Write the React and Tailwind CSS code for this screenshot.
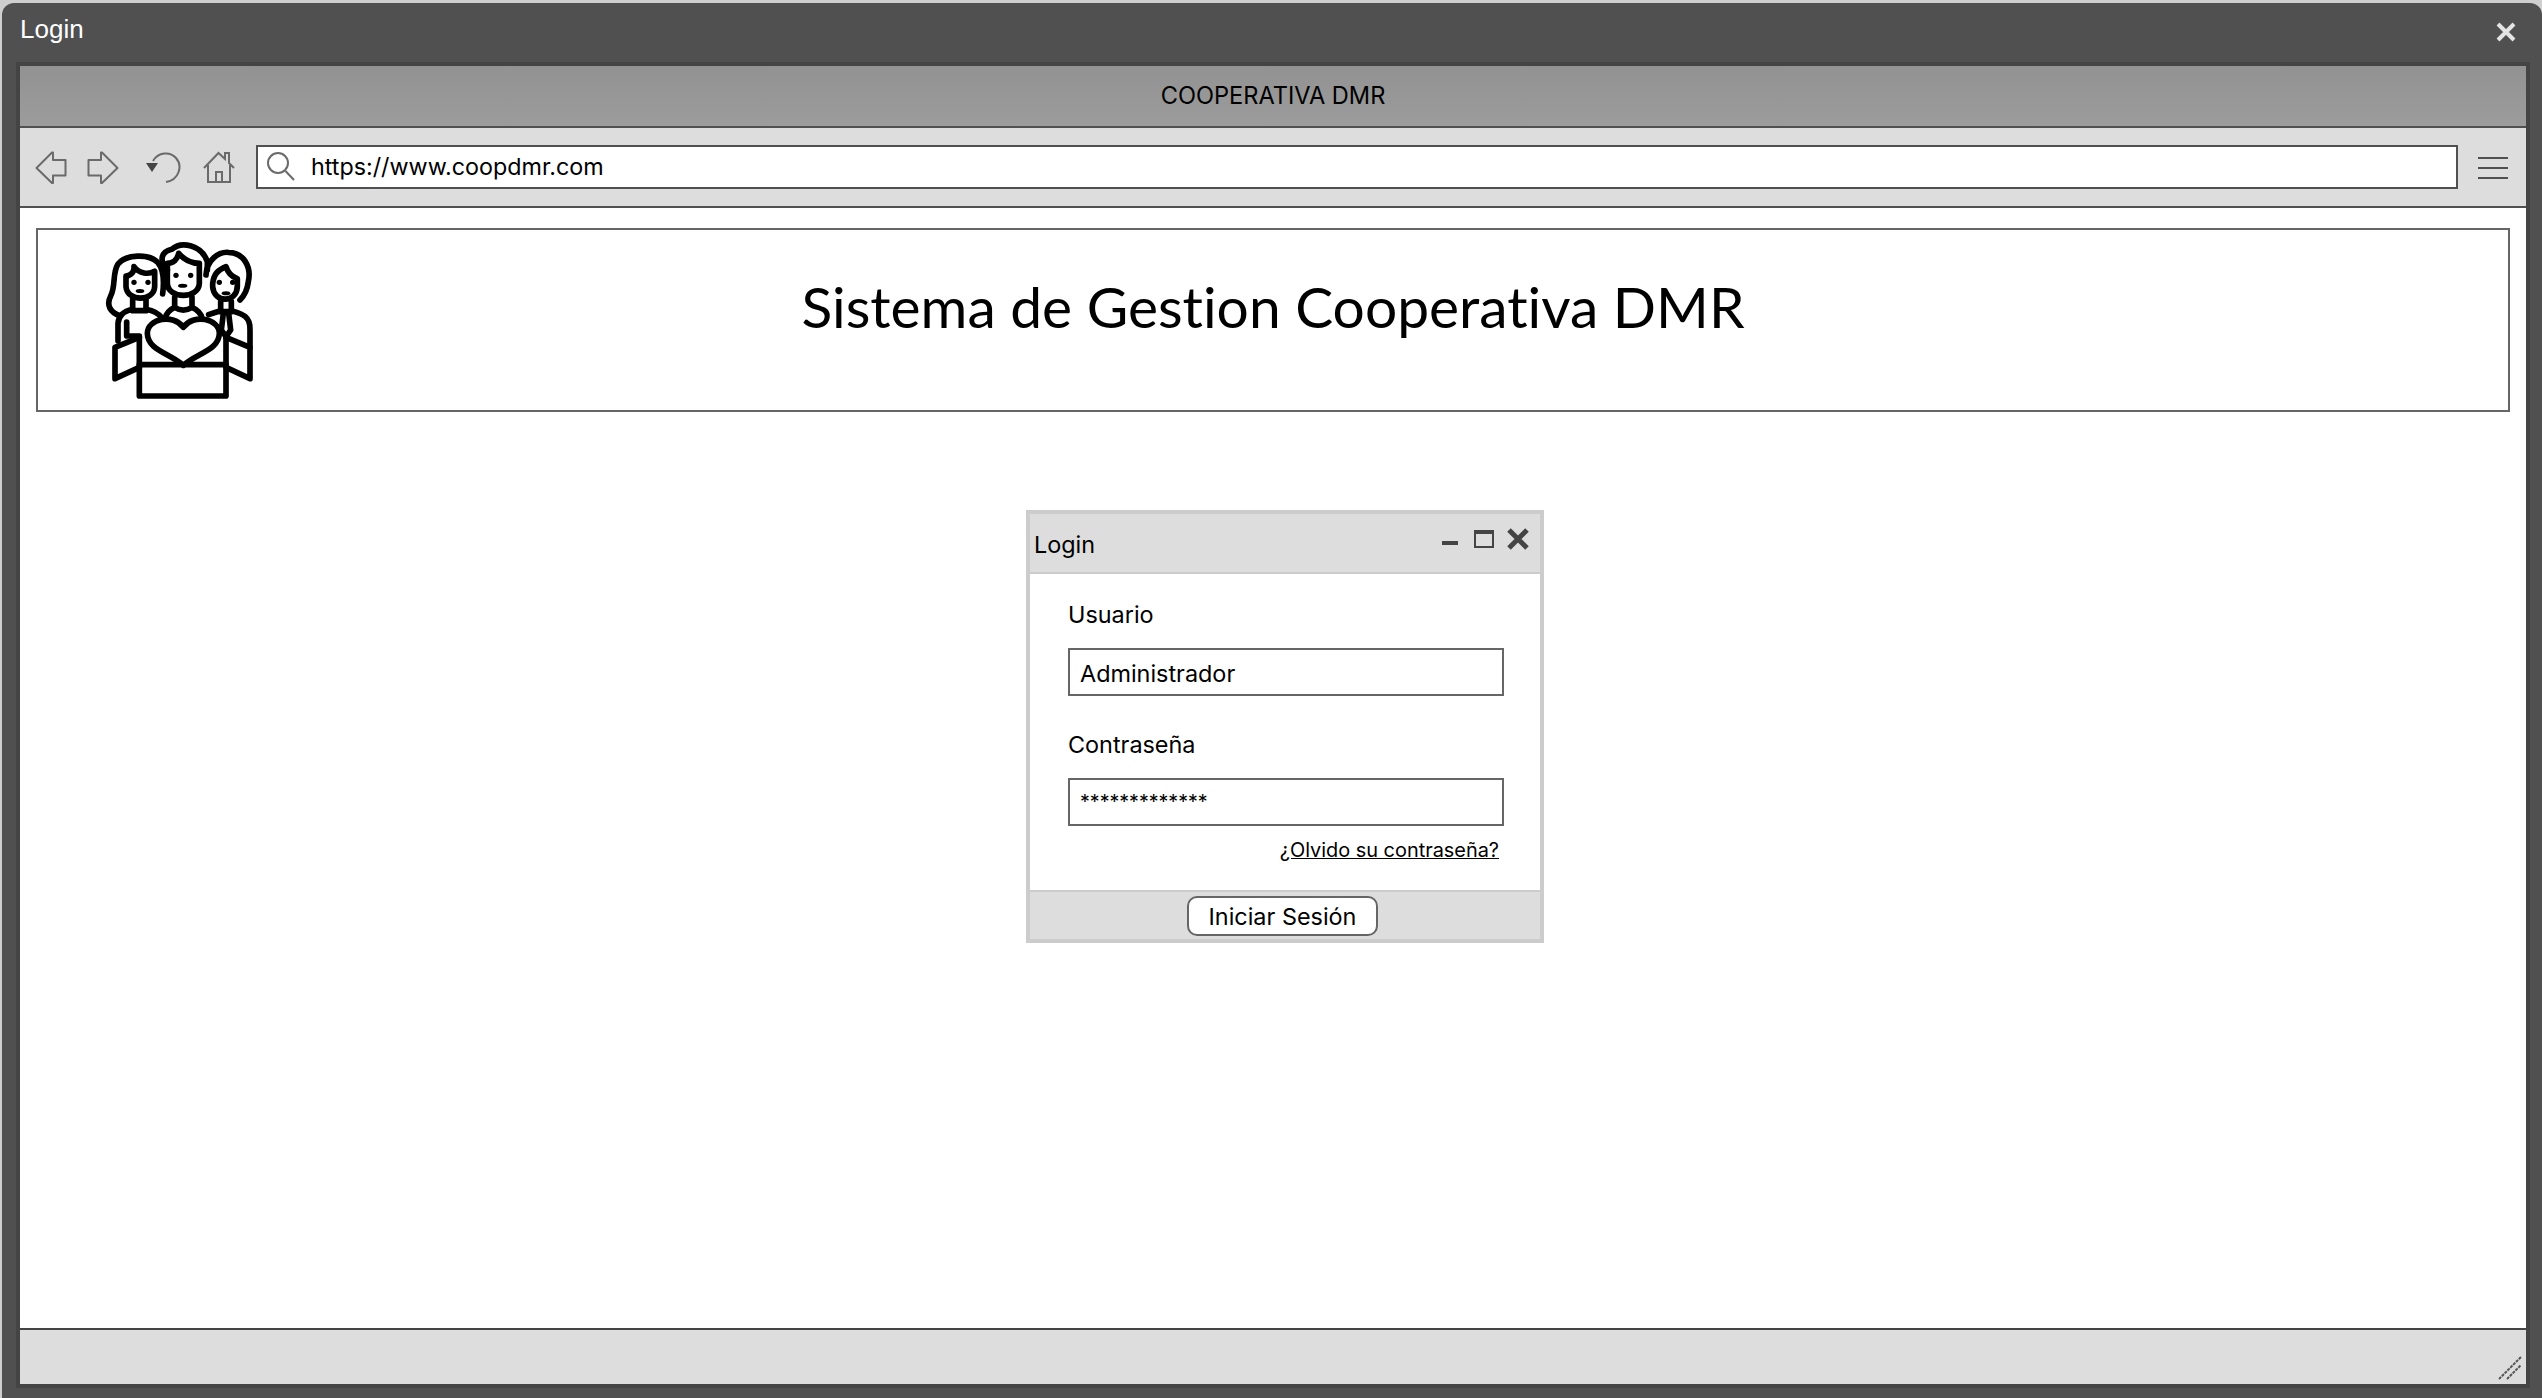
import React from "react";

const Sans = "font-['Inter','Liberation_Sans',sans-serif]";
const G = "#6a6a6a";

function Back({ flip }) {
  return (
    <svg width="32" height="34" viewBox="0 0 32 34" className={flip ? "-scale-x-100" : ""}>
      <path d="M1.5 17 L17 1.5 L18 1.5 L18 9 L30.5 9 L30.5 24.5 L18 24.5 L18 32 L17 32 Z" fill="none" stroke={G} strokeWidth="2" strokeLinejoin="round" />
    </svg>
  );
}
function Reload() {
  return (
    <svg width="36" height="34" viewBox="0 0 36 34">
      <path d="M7 10 C12 1 24 0 30 7 C37 15 33 29 20 31" fill="none" stroke={G} strokeWidth="2" />
      <path d="M0 12 L12 12 L6 21 Z" fill="#444" />
    </svg>
  );
}
function Home() {
  return (
    <svg width="32" height="34" viewBox="0 0 32 34">
      <path d="M1 17 L15.5 2 L22 8 L22 2 L26 2 L26 12 L31 17 M5 14 L5 31 L27 31 L27 14 M13 31 L13 21 L19 21 L19 31" fill="none" stroke={G} strokeWidth="2" />
    </svg>
  );
}
function Search() {
  return (
    <svg width="30" height="32" viewBox="0 0 30 32">
      <circle cx="12" cy="12" r="10" fill="none" stroke={G} strokeWidth="2" />
      <path d="M19.5 20 L28 29" stroke={G} strokeWidth="2" />
    </svg>
  );
}
function Logo() {
  return (
    <svg width="190" height="180" viewBox="0 30 570 540" fill="none" stroke="#000" strokeWidth="17" strokeLinejoin="round" strokeLinecap="round">
      <path d="M92 288 C60 278 48 255 62 228 C78 198 66 160 84 132 C108 102 178 100 204 128 C222 150 222 190 218 222" />
      <path d="M108 168 C124 166 134 154 132 140 C148 162 176 164 194 154 L194 200 C192 246 112 246 108 200 Z" />
      <path d="M128 236 L128 272 L168 272 L168 236" />
      <path d="M128 268 C100 274 86 286 84 310 L84 362" />
      <path d="M110 306 L110 348 L148 348" />
      <path d="M168 268 C190 272 208 282 218 296" />
      <circle cx="132" cy="187" r="8" fill="#000" stroke="none" />
      <circle cx="174" cy="187" r="8" fill="#000" stroke="none" />
      <ellipse cx="150" cy="213" rx="13" ry="6" fill="#000" stroke="none" />

      <path d="M232 150 C205 120 215 95 245 88 C275 62 335 75 352 125 L352 150" />
      <path d="M232 130 C250 130 262 118 266 100 C285 122 310 130 328 130 L328 190 C326 238 234 238 232 190 Z" />
      <path d="M254 232 L254 262 C240 268 228 282 224 298 M306 232 L306 262 C320 268 334 282 338 298 M254 262 C270 272 290 272 306 262" />
      <circle cx="258" cy="166" r="8" fill="#000" stroke="none" />
      <circle cx="302" cy="166" r="8" fill="#000" stroke="none" />
      <ellipse cx="278" cy="197" rx="14" ry="6" fill="#000" stroke="none" />

      <path d="M348 165 C350 120 385 95 415 97 C460 97 485 140 475 185 C472 210 462 228 450 240" />
      <path d="M368 190 C372 160 385 150 408 140 C414 160 430 172 442 176 L442 200 C440 250 372 250 368 200 Z" />
      <circle cx="388" cy="187" r="8" fill="#000" stroke="none" />
      <circle cx="428" cy="187" r="8" fill="#000" stroke="none" />
      <ellipse cx="408" cy="220" rx="13" ry="6" fill="#000" stroke="none" />
      <path d="M392 245 L392 275 L424 275 L424 245" />
      <path d="M392 272 C378 276 366 280 356 284 M424 272 C450 280 482 285 480 330 L480 382" />
      <path d="M400 280 L394 330 L408 350 L422 330 L416 280" />

      <path d="M148 350 L148 528 L408 528 L408 350" />
      <path d="M148 434 L408 434" />
      <path d="M148 352 L75 382 L75 476 L148 442" />
      <path d="M408 352 L480 382 L480 476 L408 442" />
      <path d="M280 436 C240 400 172 390 172 340 C172 296 250 280 280 322 C310 280 388 296 388 340 C388 390 320 400 280 436 Z" fill="#fff" />
    </svg>
  );
}

function Field({ label, value, mt, stars }) {
  return (
    <div className={mt}>
      <div className="h-[32px] pt-[1px] text-[23.4px] leading-[32px] text-black">{label}</div>
      <div className={`mt-[18px] h-[48px] w-[436px] border-2 border-[#666] bg-white pl-[10px] text-black ${stars ? "text-[19.6px] leading-[44px]" : "pt-[1px] text-[23.4px] leading-[46px]"}`}>
        {value}
      </div>
    </div>
  );
}

export default function App() {
  return (
    <div className={`h-[1398px] w-[2542px] overflow-hidden bg-[#cfcfcf] pl-[2px] pt-[3px] ${Sans}`}>
      <div className="flex h-full flex-col rounded-t-[12px] bg-[#505050]">
        <div className="flex h-[59px] items-start justify-between pl-[18px] pr-[26px] pt-[10px]">
          <span className="font-['Liberation_Sans',sans-serif] text-[26px] leading-[32px] text-white">Login</span>
          <svg width="20" height="20" viewBox="0 0 20 20" className="mt-[9px]">
            <path d="M2 2 L18 18 M18 2 L2 18" stroke="#e4e4e4" strokeWidth="4" />
          </svg>
        </div>
        <div className="ml-[14px] mr-[12px] flex h-[1326px] flex-col border-4 border-[#444]">
          <div className="flex h-[60px] items-center justify-center bg-[linear-gradient(#929292,#9c9c9c)] text-[23.6px] text-black">
            COOPERATIVA DMR
          </div>
          <div className="flex h-[82px] items-center border-y-2 border-[#505050] bg-[#dddddd] pl-[15px] pr-[18px]">
            <div className="mt-[2px] flex items-center">
              <Back />
              <div className="ml-[20px]"><Back flip /></div>
              <div className="ml-[27px]"><Reload /></div>
              <div className="ml-[21px]"><Home /></div>
            </div>
            <div className="ml-[21px] flex h-[44px] w-[2202px] items-center border-2 border-[#505050] bg-white pl-[8px]">
              <Search />
              <span className="ml-[15px] text-[23.3px] text-black">https://www.coopdmr.com</span>
            </div>
            <div className="ml-[20px] mt-[2px] flex w-[30px] flex-col gap-[8px]">
              <div className="h-[2px] bg-[#505050]" />
              <div className="h-[2px] bg-[#505050]" />
              <div className="h-[2px] bg-[#505050]" />
            </div>
          </div>
          <div className="flex-1 bg-white px-[16px] pt-[20px]">
            <div className="grid h-[184px] grid-cols-[1fr_auto_1fr] items-center border-2 border-[#666]">
              <div className="pl-[52px]"><Logo /></div>
              <div className="mb-[26px] font-['Lato',sans-serif] text-[56.9px] [font-variant-ligatures:none] text-black">Sistema de Gestion Cooperativa DMR</div>
              <div />
            </div>
            <div className="ml-[990px] mt-[98px] h-[433px] w-[518px] border-4 border-[#cccccc] bg-white">
              <div className="flex h-[60px] items-center justify-between border-b-2 border-[#cccccc] bg-[#dddddd] pl-[4px] pr-[11px]">
                <span className="pt-[4px] text-[23.4px] text-black">Login</span>
                <div className="mb-[8px] flex items-center">
                  <div className="mt-[8px] h-[4px] w-[16px] bg-[#444]" />
                  <div className="ml-[16px] h-[18px] w-[20px] border-2 border-t-[4px] border-[#444]" />
                  <svg width="22" height="22" viewBox="0 0 22 22" className="ml-[13px]">
                    <path d="M2 2 L20 20 M20 2 L2 20" stroke="#444" strokeWidth="5" />
                  </svg>
                </div>
              </div>
              <div className="flex h-[316px] flex-col pl-[38px] pt-[24px]">
                <Field label="Usuario" value="Administrador" />
                <Field label="Contraseña" value="*************" mt="mt-[32px]" stars />
                <div className="mt-[10px] w-[431px] text-right text-[19.9px] leading-[28px] text-black underline">¿Olvido su contraseña?</div>
              </div>
              <div className="flex h-[49px] justify-center border-t-2 border-[#cccccc] bg-[#dddddd] pr-[5px] pt-[4px]">
                <div className="flex h-[40px] w-[191px] items-center justify-center rounded-[10px] border-2 border-[#666] bg-white pt-[2px] text-[23.4px] text-black">
                  Iniciar Sesión
                </div>
              </div>
            </div>
          </div>
          <div className="flex h-[56px] items-end justify-end border-t-2 border-[#444] bg-[#dddddd] pb-[4px] pr-[4px]">
            <svg width="24" height="24" viewBox="0 0 24 24">
              <path d="M1 23 L23 1 M9 23 L23 9" stroke="#555" strokeWidth="2" strokeDasharray="3 1" />
            </svg>
          </div>
        </div>
      </div>
    </div>
  );
}
